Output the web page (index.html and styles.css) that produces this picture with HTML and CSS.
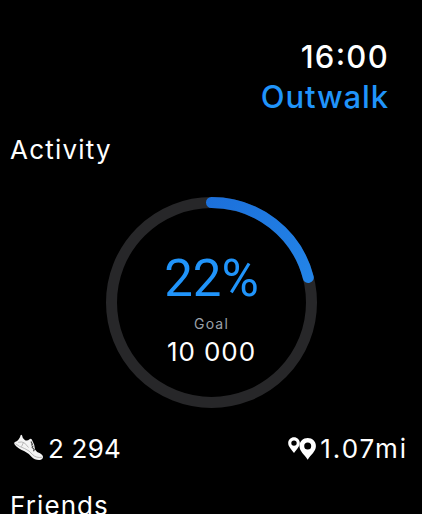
FILE: index.html
```
<!DOCTYPE html>
<html lang="en">
<head>
<meta charset="utf-8">
<title>Outwalk</title>
<link rel="stylesheet" href="styles.css">
</head>
<body>
<main class="watch">
  <header class="header">
    <div class="time">16:00</div>
    <div class="app-name">Outwalk</div>
  </header>
  <h1 class="section activity">Activity</h1>
  <section class="progress">
    <svg class="ring" viewBox="0 0 211 211">
      <defs>
        <linearGradient id="blue" gradientUnits="userSpaceOnUse" x1="105" y1="0" x2="210" y2="85">
          <stop offset="0" stop-color="#1c70db"/>
          <stop offset="1" stop-color="#2385e8"/>
        </linearGradient>
      </defs>
      <circle cx="105.5" cy="105.5" r="100" fill="none" stroke="#272729" stroke-width="11"/>
      <path d="M105.5 5.5 A100 100 0 0 1 202.3 80.5" fill="none" stroke="url(#blue)" stroke-width="11" stroke-linecap="round"/>
    </svg>
    <div class="summary">
      <div class="percent">22%</div>
      <div class="goal-label">Goal</div>
      <div class="goal">10 000</div>
    </div>
  </section>
  <section class="stats">
    <div class="stat">
      <svg class="shoe" viewBox="0 0 30 28">
        <path d="M6.6 1.2 Q7.2 .5 8 1.2 Q8.2 4.2 11 6.2 Q13.5 7.3 15.5 5.2 Q16.8 4.2 17.8 5.5 L20.2 10.8 L21 15.5 Q22.2 18 26 19.2 Q29.2 20.8 29 23 Q28.8 25.7 25.5 26 Q20.8 26.2 17.5 22.8 Q14.5 19.2 10.5 17.2 Q3.2 14.2 .5 10.2 Q-.2 8.8 1 8 Q5.7 6 6.6 1.2Z" fill="#f4f4f4"/>
        <path d="M1.5 9.7 Q5 12.7 10.5 14.5 Q15.5 16.4 18.8 20.8 Q22.2 24.2 28 23.3 M4.2 8.3 Q8 7.2 10.8 9.2 L14.5 13.5 M7.5 12.7 L9.4 8.6" fill="none" stroke="#aaa" stroke-width=".8"/>
        <path d="M17 7.5 L18.4 10.4 L17.2 11.2 M19.2 11.6 L18.1 13.3 L20.3 15.5 L19.5 17.2" fill="none" stroke="#444" stroke-width="1.1"/>
      </svg>
      <span class="steps">2 294</span>
    </div>
    <div class="stat">
      <svg class="pins" viewBox="0 0 28 24" fill="#fff" fill-rule="evenodd">
        <path d="M6 .3 C9.2 .3 11.8 2.8 11.8 5.9 C11.8 9.8 8.5 12 6 16 C3.5 12 .2 9.8 .2 5.9 C.2 2.8 2.8 .3 6 .3Z M6 3.4 A2.7 2.7 0 1 0 6 8.8 A2.7 2.7 0 1 0 6 3.4Z"/>
        <path d="M19.7 1 C24.3 1 27.9 4.5 27.9 9 C27.9 14.5 23 17.3 19.7 22.8 C16.4 17.3 11.5 14.5 11.5 9 C11.5 4.5 15.1 1 19.7 1Z M19.7 5.6 A3.5 3.5 0 1 0 19.7 12.6 A3.5 3.5 0 1 0 19.7 5.6Z"/>
      </svg>
      <span class="distance">1.07mi</span>
    </div>
  </section>
  <h2 class="section friends">Friends</h2>
</main>
</body>
</html>
```
FILE: styles.css
```
body {
  margin: 0;
  background: #000;
  color: #fff;
  font-family: Inter, Roboto, sans-serif;
}

.watch {
  box-sizing: border-box;
  width: 422px;
  height: 514px;
  padding-top: 37px;
  overflow: hidden;
}

.header {
  padding-right: 33px;
  font-size: 31px;
  font-weight: 500;
  line-height: 40px;
  text-align: right;
}

.time {
  font-feature-settings: "case";
  letter-spacing: 1.3px;
}

.app-name {
  color: #2094fa;
  letter-spacing: 0.9px;
}

.section {
  margin: 0;
  padding-left: 10px;
  font-size: 26px;
  font-weight: 400;
  line-height: 40px;
  letter-spacing: 1.2px;
}

.activity {
  margin-top: 13px;
}

.progress {
  display: grid;
  width: 211px;
  height: 211px;
  margin: 27px 0 0 106px;
}

.ring,
.summary {
  grid-area: 1 / 1;
  width: 211px;
  height: 211px;
}

.summary {
  box-sizing: border-box;
  padding-top: 52px;
  text-align: center;
}

.percent {
  color: #2094fa;
  font-family: Roboto, sans-serif;
  font-size: 51px;
  line-height: 60px;
}

.goal-label {
  margin-top: 5px;
  color: #9ba0aa;
  font-size: 14px;
  line-height: 20px;
  letter-spacing: 1.2px;
}

.goal {
  margin-top: 3px;
  font-size: 26px;
  line-height: 30px;
  letter-spacing: 0.9px;
}

.stats {
  display: flex;
  justify-content: space-between;
  margin: 21px 15px 0 14px;
  font-size: 26px;
  line-height: 40px;
}

.stat {
  display: flex;
  align-items: flex-start;
}

.shoe {
  width: 30px;
  height: 28px;
  margin: 5px 4px 0 0;
}

.pins {
  width: 28px;
  height: 24px;
  margin: 8px 4px 0 0;
}

.steps {
  letter-spacing: 0.2px;
}

.distance {
  margin-right: -1px;
  letter-spacing: 2px;
}

.friends {
  margin-top: 17px;
  letter-spacing: 1.1px;
}
```
